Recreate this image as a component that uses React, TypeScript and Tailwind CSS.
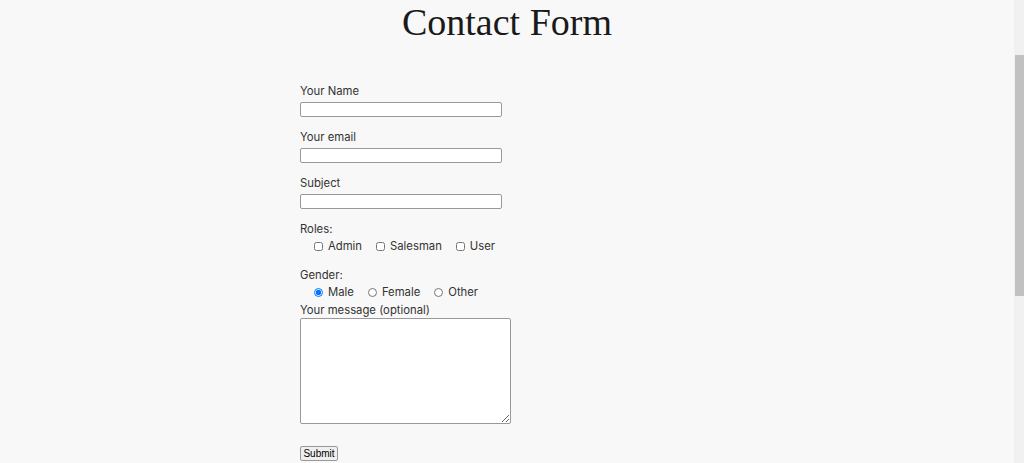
export default function App() {
  return (
    <div className="flex h-[463px] w-full overflow-hidden bg-[#f8f8f8] text-[#333] font-['Inter','Noto_Sans',sans-serif]">
      <main className="flex-1">
        {/* Title */}
        <h1 className="text-center font-['Liberation_Serif',serif] text-[38px] leading-[44px] text-[#1a1a1a]">
          Contact Form
        </h1>

        <form className="mx-auto mt-[38px] w-[414px] text-[11.3px] leading-[16px]">
          <Field label="Your Name" />
          <Field label="Your email" />
          <Field label="Subject" />

          {/* Roles */}
          <div>
            <div className="pt-px">Roles:</div>
            <div className="mt-px flex items-center gap-[14px] pl-[14px]">
              {["Admin", "Salesman", "User"].map((r) => (
                <label key={r} className="flex items-center gap-[5px]">
                  <input type="checkbox" className="h-[9px] w-[9px] m-0" />
                  <span>{r}</span>
                </label>
              ))}
            </div>
          </div>

          {/* Gender */}
          <div className="mt-[12px]">
            <div className="pt-px">Gender:</div>
            <div className="mt-px flex items-center gap-[14px] pl-[14px]">
              {["Male", "Female", "Other"].map((g, i) => (
                <label key={g} className="flex items-center gap-[5px]">
                  <input
                    type="radio"
                    name="gender"
                    defaultChecked={i === 0}
                    className="h-[9px] w-[9px] m-0 accent-[#0075ff]"
                  />
                  <span>{g}</span>
                </label>
              ))}
            </div>
          </div>

          {/* Message */}
          <div className="mt-px">
            <div className="pt-px">Your message (optional)</div>
            <textarea className="block h-[106px] w-[211px] rounded-[2px] border border-[#999] bg-white" />
          </div>

          <button
            type="button"
            className="mt-[22px] h-[15px] w-[38px] rounded-[2px] border border-[#999] bg-[#efefef] font-['Liberation_Sans',Arial,sans-serif] text-[10px] leading-[13px] text-black"
          >
            Submit
          </button>
        </form>
      </main>

      {/* Scrollbar */}
      <div className="w-[10px] bg-[#f1f1f1] pl-px pt-[55px]">
        <div className="h-[241px] w-full bg-[#c1c1c1]" />
      </div>
    </div>
  );
}

function Field({ label }: { label: string }) {
  return (
    <div className="mb-[11px]">
      <div className="pt-px">{label}</div>
      <input
        type="text"
        className="mt-[3px] block h-[15px] w-[202px] rounded-[2px] border border-[#999] bg-white"
      />
    </div>
  );
}
